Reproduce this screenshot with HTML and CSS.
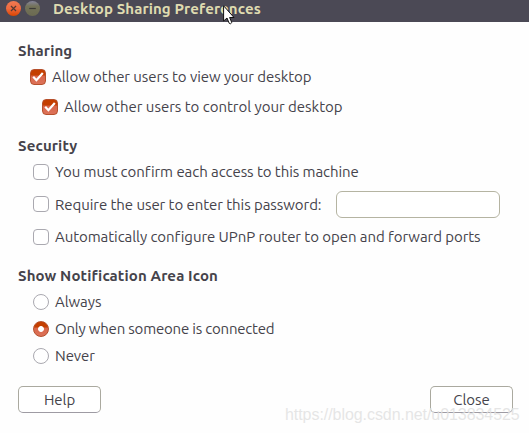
FILE: index.html
```html
<!DOCTYPE html>
<html lang="en">
<head>
<meta charset="utf-8">
<title>Desktop Sharing Preferences</title>
<link rel="stylesheet" href="styles.css">
</head>
<body>
<div class="window">
  <header class="titlebar">
    <span class="control control-close"><svg viewBox="0 0 16 16"><path d="M5.3 5.3l5.4 5.4M10.7 5.3l-5.4 5.4"/></svg></span>
    <span class="control control-min"><svg viewBox="0 0 16 16"><path d="M4.5 8h7"/></svg></span>
    <h1>Desktop Sharing Preferences</h1>
  </header>
  <main class="content">
    <section class="sharing">
      <h2>Sharing</h2>
      <label class="row row-view"><span class="check checked"><svg viewBox="0 0 16 16"><path d="M3.2 7.8l3.2 3.4L12.8 4"/></svg></span><span>Allow other users to view your desktop</span></label>
      <label class="row row-control"><span class="check checked"><svg viewBox="0 0 16 16"><path d="M3.2 7.8l3.2 3.4L12.8 4"/></svg></span><span>Allow other users to control your desktop</span></label>
    </section>
    <section class="security">
      <h2>Security</h2>
      <label class="row row-confirm"><span class="check"></span><span>You must confirm each access to this machine</span></label>
      <label class="row row-password"><span class="check"></span><span>Require the user to enter this password:</span><span class="entry"></span></label>
      <label class="row row-upnp"><span class="check"></span><span>Automatically configure UPnP router to open and forward ports</span></label>
    </section>
    <section class="notify">
      <h2>Show Notification Area Icon</h2>
      <label class="row"><span class="radio"></span><span>Always</span></label>
      <label class="row row-only"><span class="radio selected"></span><span>Only when someone is connected</span></label>
      <label class="row"><span class="radio"></span><span>Never</span></label>
    </section>
    <footer class="actions">
      <span class="button">Help</span>
      <span class="button">Close</span>
    </footer>
  </main>
  <div class="watermark">https://blog.csdn.net/u013834525</div>
  <svg class="cursor" viewBox="0 0 12 20"><path d="M.6.8v15.2l3.4-3 2.2 5.3 1.2.5 1.4-1.2-2.2-5.1h4.4z"/></svg>
</div>
</body>
</html>
```
FILE: styles.css
```css
* { box-sizing: border-box; }
body { margin: 0; background: #fefefe; }
.window {
  position: relative;
  width: 529px;
  height: 433px;
  overflow: hidden;
  color: #45434b;
  font: 15px/20px "Ubuntu", "Noto Sans", sans-serif;
  letter-spacing: -.06px;
  white-space: nowrap;
}
.titlebar {
  display: flex;
  align-items: flex-start;
  height: 22px;
  padding-left: 6px;
  background: #4b4955;
}
.control {
  width: 15px;
  height: 15px;
  margin-top: 1px;
  border-radius: 50%;
}
.control svg { display: block; width: 15px; height: 15px; fill: none; stroke: #573a32; stroke-width: 1.3; }
.control-close { background: linear-gradient(#f17a52, #ee6a40 50%, #dc4500); }
.control-min { margin-left: 4px; background: linear-gradient(#85849a, #74735a 35%, #6b6a51); }
.control-min svg { stroke: #3d3b38; }
h1 { margin: -1px 0 0 13px; color: #dfdbb0; font-size: 15px; line-height: 20px; font-weight: 700; letter-spacing: .11px; }
h2 { margin: 0; height: 20px; font-size: 15px; line-height: 20px; font-weight: 700; letter-spacing: .13px; }
.content { padding: 19px 18px 0; }
.row { display: flex; align-items: center; height: 27px; padding-left: 15px; gap: 6px; }
.check, .radio { flex: none; width: 16px; height: 16px; border: 1px solid #aaa9b0; background: #fff; }
.check { border-radius: 4px; }
.checked { border-color: #b6502c; background: linear-gradient(#c43f00 35%, #d9674b 45%, #dc7259); }
.checked svg { display: block; width: 16px; height: 16px; margin: -1px; fill: none; stroke: #fff; stroke-width: 2.2; }
.radio { border-radius: 50%; }
.selected { border-color: #b6502c; background: radial-gradient(circle, #fff 0 2.5px, transparent 3.3px), linear-gradient(#c43f00 35%, #d9674b 45%, #dc7259); }
.row-view { height: 31px; padding-left: 12px; }
.row-control { height: 30px; padding-left: 24px; letter-spacing: -.02px; }
.security { margin-top: 14px; }
.row-confirm { height: 32px; }
.row-password { height: 33px; }
.row-password .check { margin-bottom: 2px; }
.row-upnp { height: 32px; }
.row-only { letter-spacing: -.2px; }
.entry { width: 164px; height: 27px; margin-left: auto; margin-right: 11px; border: 1px solid #b5b4a2; border-radius: 6px; background: #fff; }
.notify { margin-top: 13px; }
.notify h2 { margin-bottom: 2px; }
.actions { display: flex; justify-content: space-between; margin-top: 17px; margin-right: -2px; }
.button { display: flex; justify-content: center; align-items: center; width: 83px; height: 27px; border: 1px solid #aaa99f; border-bottom-color: #9e9ba3; border-radius: 5px; background: #fff; }
.watermark {
  position: absolute;
  left: 285px;
  top: 405px;
  color: rgba(225, 225, 225, .85);
  font: 16px/20px "Liberation Sans", sans-serif;
  letter-spacing: -.06px;
}
.cursor { position: absolute; left: 223px; top: 5px; width: 12px; height: 20px; fill: #fff; stroke: #111; stroke-width: 1; }
```
